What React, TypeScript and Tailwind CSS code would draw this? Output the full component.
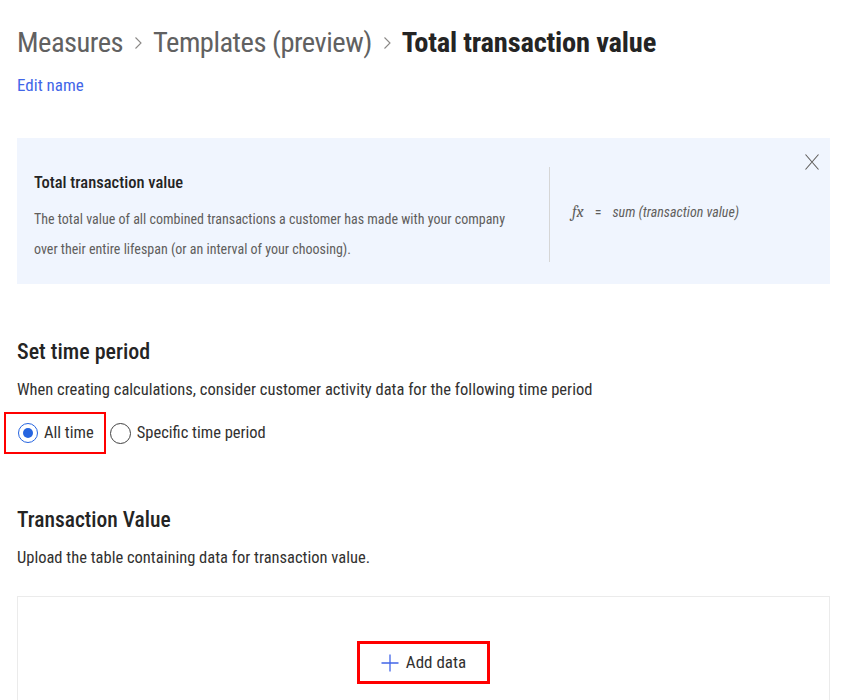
const font = { fontFamily: '"Roboto Condensed", "Liberation Sans", sans-serif' };

function Chevron() {
  return (
    <svg className="mx-[10px] h-[14px] w-[10px] self-center" viewBox="0 0 10 14" fill="none">
      <path d="M2.5 1.5 L8 7 L2.5 12.5" stroke="#8a8886" strokeWidth="1.1" />
    </svg>
  );
}

function Radio({ checked, label }: { checked?: boolean; label: string }) {
  return (
    <label className="flex items-center gap-[6px] text-[16.5px] text-[#323130]">
      <span
        className={
          checked
            ? "flex h-[20px] w-[20px] items-center justify-center rounded-full border border-[#2564e0]"
            : "flex h-[21px] w-[21px] items-center justify-center rounded-full border border-[#424242]"
        }
      >
        {checked && <span className="h-[10px] w-[10px] rounded-full bg-[#2564e0]" />}
      </span>
      <span>{label}</span>
    </label>
  );
}

export default function App() {
  return (
    <div style={font} className="h-[700px] w-[853px] overflow-hidden bg-white pl-[17px] pr-[23px] pt-[22px]">
      <div className="flex items-baseline text-[28.5px] leading-[42px] text-[#616161]">
        <span className="tracking-[-0.5px]">Measures</span>
        <Chevron />
        <span className="tracking-[-0.5px]">Templates (preview)</span>
        <Chevron />
        <span className="font-bold tracking-[-0.2px] text-[#242424]">Total transaction value</span>
      </div>
      <div className="mt-[10px] text-[17px] leading-[22px] text-[#4266e8]">Edit name</div>

      <div className="relative mt-[42px] flex h-[146px] items-start bg-[#f0f5fe] pl-[17px] pt-[34px]">
        <div className="w-[500px]">
          <div className="text-[16.5px] font-medium leading-[22px] text-[#242424]">Total transaction value</div>
          <p className="mt-[10px] text-[14px] leading-[30px] text-[#605e5c]">
            The total value of all combined transactions a customer has made with your company
            <br />
            over their entire lifespan (or an interval of your choosing).
          </p>
        </div>
        <div className="-mt-[5px] ml-[15px] flex h-[95px] border-l border-[#d6d6d6] pl-[22px] pt-[35px] text-[14px] italic text-[#605e5c]">
          <span className="font-serif text-[16px] leading-[20px]">fx</span>
          <span className="px-[11px] not-italic leading-[20px]">=</span>
          <span className="leading-[20px]">sum (transaction value)</span>
        </div>
        <svg className="absolute right-[11px] top-[16px] h-[16px] w-[14px]" viewBox="0 0 14 16" fill="none">
          <path d="M0.5 0.5 L13.5 15.5 M13.5 0.5 L0.5 15.5" stroke="#605e5c" strokeWidth="1.1" />
        </svg>
      </div>

      <h2 className="mt-[53px] text-[22px] font-medium leading-[30px] text-[#242424]">Set time period</h2>
      <p className="mt-[12px] text-[16.5px] leading-[22px] text-[#323130]">
        When creating calculations, consider customer activity data for the following time period
      </p>
      <div className="-ml-[13px] mt-[11px] flex items-center">
        <div className="flex h-[42px] items-center border-2 border-[#ff0000] pl-[12px] pr-[10px]">
          <Radio checked label="All time" />
        </div>
        <div className="ml-[4px]">
          <Radio label="Specific time period" />
        </div>
      </div>

      <h2 className="mt-[51px] text-[21.5px] font-medium leading-[30px] text-[#242424]">Transaction Value</h2>
      <p className="mt-[12px] text-[16.5px] leading-[22px] text-[#323130]">
        Upload the table containing data for transaction value.
      </p>
      <div className="mt-[27px] flex h-[140px] justify-center border border-[#ebebeb] pt-[44px]">
        <div className="flex h-[43px] w-[133px] items-center justify-center gap-[7px] border-[3px] border-[#ff0000] text-[17px] text-[#323130]">
          <svg className="h-[18px] w-[18px]" viewBox="0 0 18 18" fill="none">
            <path d="M9 0.5 V17.5 M0.5 9 H17.5" stroke="#4266e8" strokeWidth="1.3" />
          </svg>
          <span>Add data</span>
        </div>
      </div>
    </div>
  );
}
